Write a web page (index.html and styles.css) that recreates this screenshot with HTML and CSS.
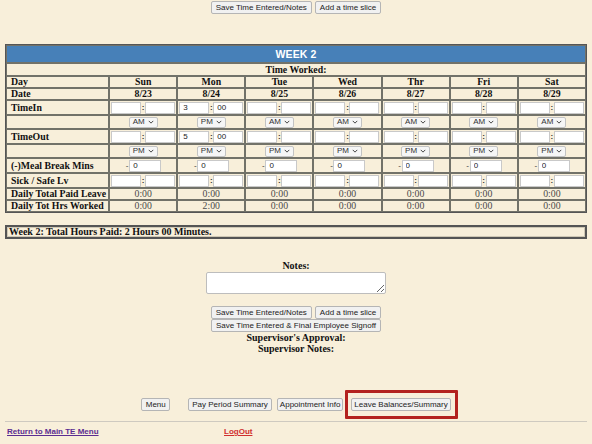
FILE: index.html
```html
<!DOCTYPE html>
<html>
<head>
<meta charset="utf-8">
<link rel="stylesheet" href="styles.css">
</head>
<body>
<div class="btnrow top">
  <button class="btn">Save Time Entered/Notes</button>
  <button class="btn">Add a time slice</button>
</div>

<table class="week">
  <colgroup>
    <col class="c-lbl"><col class="c-day"><col class="c-day"><col class="c-day"><col class="c-day"><col class="c-day"><col class="c-day"><col class="c-day">
  </colgroup>
  <tr class="r-hdr"><th colspan="8" class="hdr">WEEK 2</th></tr>
  <tr class="r-sub"><th colspan="8" class="sub">Time Worked:</th></tr>
  <tr class="r-txt">
    <th class="lbl">Day</th><th>Sun</th><th>Mon</th><th>Tue</th><th>Wed</th><th>Thr</th><th>Fri</th><th>Sat</th>
  </tr>
  <tr class="r-txt">
    <th class="lbl">Date</th><th>8/23</th><th>8/24</th><th>8/25</th><th>8/26</th><th>8/27</th><th>8/28</th><th>8/29</th>
  </tr>
  <tr class="r-in">
    <th class="lbl">TimeIn</th>
    <td><div class="time"><input class="inp" value=""><span class="colon">:</span><input class="inp" value=""></div></td>
    <td><div class="time"><input class="inp" value="3"><span class="colon">:</span><input class="inp" value="00"></div></td>
    <td><div class="time"><input class="inp" value=""><span class="colon">:</span><input class="inp" value=""></div></td>
    <td><div class="time"><input class="inp" value=""><span class="colon">:</span><input class="inp" value=""></div></td>
    <td><div class="time"><input class="inp" value=""><span class="colon">:</span><input class="inp" value=""></div></td>
    <td><div class="time"><input class="inp" value=""><span class="colon">:</span><input class="inp" value=""></div></td>
    <td><div class="time"><input class="inp" value=""><span class="colon">:</span><input class="inp" value=""></div></td>
  </tr>
  <tr class="r-sel">
    <th class="lbl"></th>
    <td><span class="sel">AM<svg class="chev" viewBox="0 0 8 5" width="6" height="4"><path d="M1 1l3 3 3-3" fill="none" stroke="#333" stroke-width="1.2"/></svg></span></td>
    <td><span class="sel">PM<svg class="chev" viewBox="0 0 8 5" width="6" height="4"><path d="M1 1l3 3 3-3" fill="none" stroke="#333" stroke-width="1.2"/></svg></span></td>
    <td><span class="sel">AM<svg class="chev" viewBox="0 0 8 5" width="6" height="4"><path d="M1 1l3 3 3-3" fill="none" stroke="#333" stroke-width="1.2"/></svg></span></td>
    <td><span class="sel">AM<svg class="chev" viewBox="0 0 8 5" width="6" height="4"><path d="M1 1l3 3 3-3" fill="none" stroke="#333" stroke-width="1.2"/></svg></span></td>
    <td><span class="sel">AM<svg class="chev" viewBox="0 0 8 5" width="6" height="4"><path d="M1 1l3 3 3-3" fill="none" stroke="#333" stroke-width="1.2"/></svg></span></td>
    <td><span class="sel">AM<svg class="chev" viewBox="0 0 8 5" width="6" height="4"><path d="M1 1l3 3 3-3" fill="none" stroke="#333" stroke-width="1.2"/></svg></span></td>
    <td><span class="sel">AM<svg class="chev" viewBox="0 0 8 5" width="6" height="4"><path d="M1 1l3 3 3-3" fill="none" stroke="#333" stroke-width="1.2"/></svg></span></td>
  </tr>
  <tr class="r-in">
    <th class="lbl">TimeOut</th>
    <td><div class="time"><input class="inp" value=""><span class="colon">:</span><input class="inp" value=""></div></td>
    <td><div class="time"><input class="inp" value="5"><span class="colon">:</span><input class="inp" value="00"></div></td>
    <td><div class="time"><input class="inp" value=""><span class="colon">:</span><input class="inp" value=""></div></td>
    <td><div class="time"><input class="inp" value=""><span class="colon">:</span><input class="inp" value=""></div></td>
    <td><div class="time"><input class="inp" value=""><span class="colon">:</span><input class="inp" value=""></div></td>
    <td><div class="time"><input class="inp" value=""><span class="colon">:</span><input class="inp" value=""></div></td>
    <td><div class="time"><input class="inp" value=""><span class="colon">:</span><input class="inp" value=""></div></td>
  </tr>
  <tr class="r-sel">
    <th class="lbl"></th>
    <td><span class="sel">PM<svg class="chev" viewBox="0 0 8 5" width="6" height="4"><path d="M1 1l3 3 3-3" fill="none" stroke="#333" stroke-width="1.2"/></svg></span></td>
    <td><span class="sel">PM<svg class="chev" viewBox="0 0 8 5" width="6" height="4"><path d="M1 1l3 3 3-3" fill="none" stroke="#333" stroke-width="1.2"/></svg></span></td>
    <td><span class="sel">PM<svg class="chev" viewBox="0 0 8 5" width="6" height="4"><path d="M1 1l3 3 3-3" fill="none" stroke="#333" stroke-width="1.2"/></svg></span></td>
    <td><span class="sel">PM<svg class="chev" viewBox="0 0 8 5" width="6" height="4"><path d="M1 1l3 3 3-3" fill="none" stroke="#333" stroke-width="1.2"/></svg></span></td>
    <td><span class="sel">PM<svg class="chev" viewBox="0 0 8 5" width="6" height="4"><path d="M1 1l3 3 3-3" fill="none" stroke="#333" stroke-width="1.2"/></svg></span></td>
    <td><span class="sel">PM<svg class="chev" viewBox="0 0 8 5" width="6" height="4"><path d="M1 1l3 3 3-3" fill="none" stroke="#333" stroke-width="1.2"/></svg></span></td>
    <td><span class="sel">PM<svg class="chev" viewBox="0 0 8 5" width="6" height="4"><path d="M1 1l3 3 3-3" fill="none" stroke="#333" stroke-width="1.2"/></svg></span></td>
  </tr>
  <tr class="r-in">
    <th class="lbl">(-)Meal Break Mins</th>
    <td><div class="meal"><span class="dash">-</span><input class="inp m" value="0"></div></td>
    <td><div class="meal"><span class="dash">-</span><input class="inp m" value="0"></div></td>
    <td><div class="meal"><span class="dash">-</span><input class="inp m" value="0"></div></td>
    <td><div class="meal"><span class="dash">-</span><input class="inp m" value="0"></div></td>
    <td><div class="meal"><span class="dash">-</span><input class="inp m" value="0"></div></td>
    <td><div class="meal"><span class="dash">-</span><input class="inp m" value="0"></div></td>
    <td><div class="meal"><span class="dash">-</span><input class="inp m" value="0"></div></td>
  </tr>
  <tr class="r-in">
    <th class="lbl">Sick / Safe Lv</th>
    <td><div class="time"><input class="inp" value=""><span class="colon">:</span><input class="inp" value=""></div></td>
    <td><div class="time"><input class="inp" value=""><span class="colon">:</span><input class="inp" value=""></div></td>
    <td><div class="time"><input class="inp" value=""><span class="colon">:</span><input class="inp" value=""></div></td>
    <td><div class="time"><input class="inp" value=""><span class="colon">:</span><input class="inp" value=""></div></td>
    <td><div class="time"><input class="inp" value=""><span class="colon">:</span><input class="inp" value=""></div></td>
    <td><div class="time"><input class="inp" value=""><span class="colon">:</span><input class="inp" value=""></div></td>
    <td><div class="time"><input class="inp" value=""><span class="colon">:</span><input class="inp" value=""></div></td>
  </tr>
  <tr class="r-txt">
    <th class="lbl">Daily Total Paid Leave</th>
    <td class="val">0:00</td><td class="val">0:00</td><td class="val">0:00</td><td class="val">0:00</td><td class="val">0:00</td><td class="val">0:00</td><td class="val">0:00</td>
  </tr>
  <tr class="r-txt">
    <th class="lbl">Daily Tot Hrs Worked</th>
    <td class="val">0:00</td><td class="val">2:00</td><td class="val">0:00</td><td class="val">0:00</td><td class="val">0:00</td><td class="val">0:00</td><td class="val">0:00</td>
  </tr>
</table>

<div class="total">Week 2: Total Hours Paid: 2 Hours 00 Minutes.</div>

<div class="notes">
  <div class="bold">Notes:</div>
  <textarea class="ta"></textarea>
</div>

<div class="actions">
  <div class="btnrow">
    <button class="btn">Save Time Entered/Notes</button>
    <button class="btn">Add a time slice</button>
  </div>
  <div class="btnrow">
    <button class="btn wide">Save Time Entered &amp; Final Employee Signoff</button>
  </div>
  <div class="bold">Supervisor's Approval:</div>
  <div class="bold">Supervisor Notes:</div>
</div>

<div class="btnrow nav">
  <button class="btn b-menu">Menu</button>
  <button class="btn b-pay">Pay Period Summary</button>
  <button class="btn b-appt">Appointment Info</button>
  <span class="hl"><button class="btn b-leave">Leave Balances/Summary</button></span>
</div>

<hr class="rule">

<div class="links">
  <a class="lnk main" href="#">Return to Main TE Menu</a>
  <a class="lnk out" href="#">LogOut</a>
</div>
</body>
</html>
```

FILE: styles.css
```css
html, body {
  margin: 0;
  padding: 0;
}
body {
  background: #f8efda;
  padding: 0 5px;
  font-family: "Liberation Serif", "Times New Roman", serif;
  color: #111;
}

.btnrow {
  display: flex;
  justify-content: center;
  gap: 3px;
}
.btnrow.top {
  padding-top: 1px;
}
.btn {
  font-family: "Liberation Sans", Arial, sans-serif;
  font-size: 8px;
  color: #222;
  background: #f1f1f1;
  border: 1px solid #b5b5b5;
  border-radius: 2px;
  height: 13px;
  line-height: 11px;
  padding: 0 4px;
  margin: 0;
  white-space: nowrap;
}

.week {
  margin-top: 30px;
  width: 582px;
  table-layout: fixed;
  border-collapse: separate;
  border-spacing: 0;
  border: 1px solid #555;
  font-size: 9.8px;
  line-height: 10px;
}
.c-lbl { width: 103px; }
.c-day { width: 68px; }
.week th, .week td {
  border: 1px solid #727269;
  padding: 0;
  text-align: center;
  vertical-align: middle;
  font-weight: bold;
}
.week .hdr {
  background: #4780b8;
  color: #fff;
  font-family: "Liberation Sans", Arial, sans-serif;
  font-size: 10.5px;
  height: 16px;
  letter-spacing: 0.1px;
}
.week .sub { height: 11px; }
.r-txt th, .r-txt td { height: 10px; }
.r-in th, .r-in td { height: 13px; }
.r-sel th, .r-sel td { height: 12px; }
.week .lbl {
  text-align: left;
  padding-left: 4px;
  white-space: nowrap;
  overflow: hidden;
}
.week .val {
  font-weight: normal;
  color: #4a4a4a;
}

.time {
  display: flex;
  justify-content: center;
  align-items: center;
}
.inp {
  box-sizing: border-box;
  width: 30px;
  height: 12px;
  margin: 0;
  padding: 0 0 0 3px;
  border: 1px solid #c9c9c9;
  background: #fff;
  font-family: "Liberation Sans", Arial, sans-serif;
  font-size: 8px;
  color: #222;
  outline: none;
}
.inp.m { width: 32px; }
.colon {
  width: 4px;
  text-align: center;
  font-family: "Liberation Sans", Arial, sans-serif;
  font-size: 8px;
  font-weight: bold;
  color: #333;
}
.meal {
  display: flex;
  justify-content: center;
  align-items: center;
}
.dash {
  width: 4px;
  font-family: "Liberation Sans", Arial, sans-serif;
  font-size: 8px;
  font-weight: normal;
  color: #333;
}
.sel {
  display: inline-flex;
  align-items: center;
  gap: 3px;
  box-sizing: border-box;
  height: 11px;
  padding: 0 3px;
  border: 1px solid #c3c3c3;
  border-radius: 2px;
  background: #f6f6f6;
  font-family: "Liberation Sans", Arial, sans-serif;
  font-size: 8px;
  font-weight: normal;
  color: #333;
  vertical-align: middle;
}
.chev { display: block; }

.total {
  margin-top: 12px;
  width: 582px;
  box-sizing: border-box;
  height: 14px;
  border: 2px solid #555;
  box-shadow: inset 0 0 0 1px #cfc8b5;
  padding: 0 2px;
  font-weight: bold;
  font-size: 10px;
  line-height: 10px;
}

.bold {
  font-weight: bold;
  font-size: 10px;
  line-height: 11px;
  text-align: center;
}
.notes {
  margin-top: 21px;
  display: flex;
  flex-direction: column;
  align-items: center;
}
.ta {
  box-sizing: border-box;
  width: 180px;
  height: 22px;
  margin: 1px 0 0;
  border: 1px solid #bdbdbd;
  border-radius: 2px;
  background: #fff;
  resize: vertical;
}
.actions {
  margin-top: 12px;
  display: flex;
  flex-direction: column;
  align-items: center;
}

.nav {
  margin-top: 44px;
  gap: 0;
}
.nav .btn { padding: 0 3px; }
.nav .b-menu { padding: 0 3.5px; }
.nav .b-appt { padding: 0 2px; }
.nav .b-leave { padding: 0 2px; }
.b-pay { margin-left: 18px; }
.b-appt { margin-left: 5px; }
.hl {
  position: relative;
  margin-left: 8px;
  display: inline-flex;
}
.hl::after {
  content: "";
  position: absolute;
  left: -6px;
  right: -7px;
  top: -8px;
  bottom: -8px;
  border: 3px solid #b3221e;
  border-radius: 1px;
  pointer-events: none;
}

.rule {
  margin: 10px 0 0;
  width: 582px;
  border: 0;
  border-top: 1px solid #cfcac0;
  height: 0;
}
.links {
  display: flex;
  padding: 5px 2px 0;
  font-family: "Liberation Sans", Arial, sans-serif;
  font-size: 8px;
  font-weight: bold;
}
.lnk { text-decoration: underline; }
.main {
  color: #5b2d91;
  width: 217px;
}
.out { color: #d02f2f; }
```
